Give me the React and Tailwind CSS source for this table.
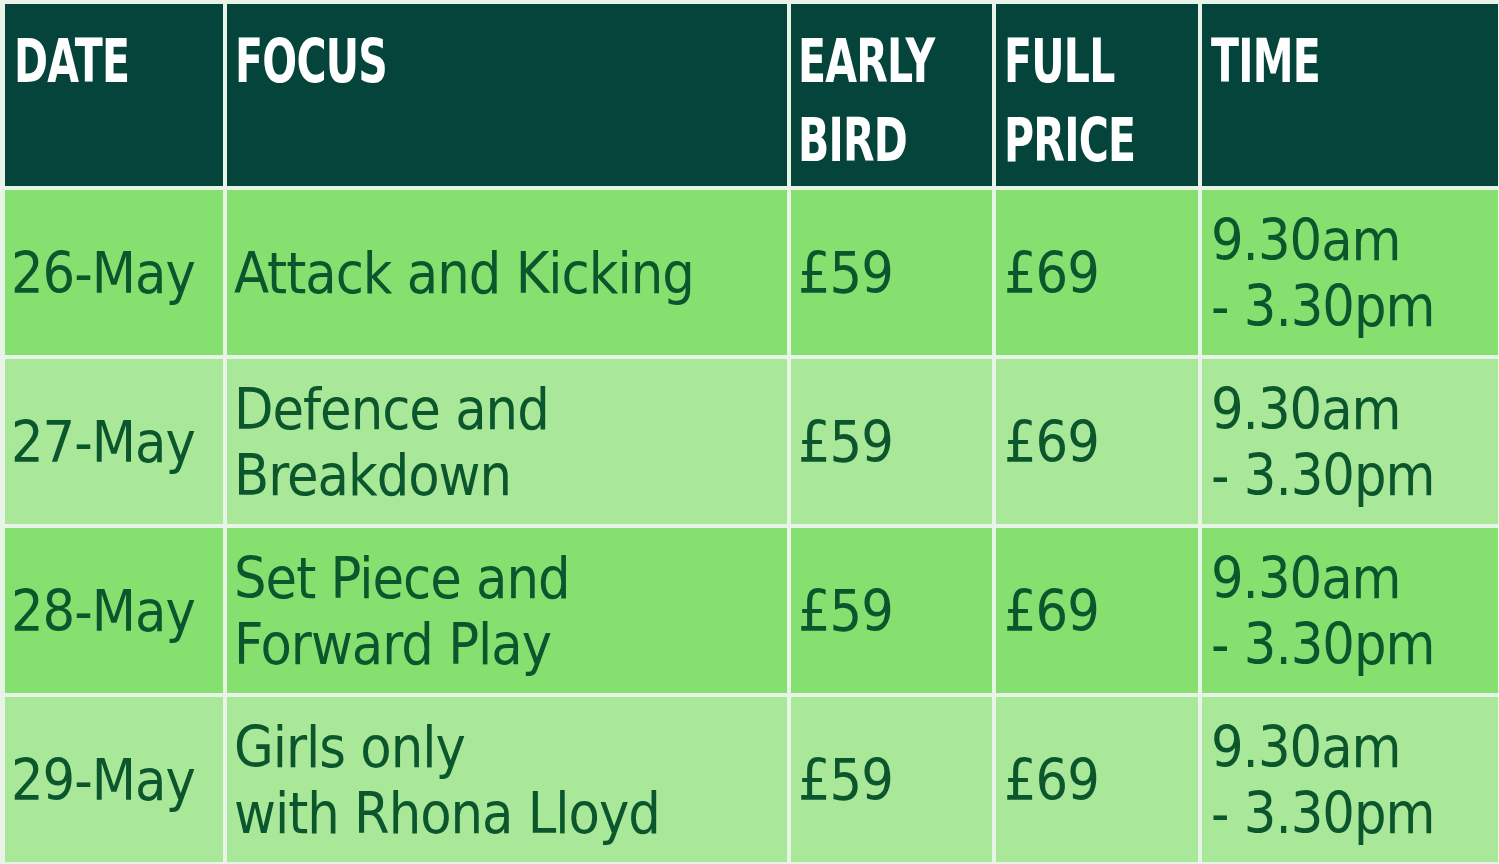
import React from 'react';

const rows = [
  { date: '26-May', focus: ['Attack and Kicking'], early: '£59', full: '£69', shade: 'bg-[#86e070]' },
  { date: '27-May', focus: ['Defence and', 'Breakdown'], early: '£59', full: '£69', shade: 'bg-[#a9e898]' },
  { date: '28-May', focus: ['Set Piece and', 'Forward Play'], early: '£59', full: '£69', shade: 'bg-[#86e070]' },
  { date: '29-May', focus: ['Girls only', 'with Rhona Lloyd'], early: '£59', full: '£69', shade: 'bg-[#a9e898]' }
];

const headers = [
  { key: 'date', lines: ['DATE'], pad: 'pl-[9px]' },
  { key: 'focus', lines: ['FOCUS'], pad: 'pl-[8px]' },
  { key: 'early', lines: ['EARLY', 'BIRD'], pad: 'pl-[7px]' },
  { key: 'full', lines: ['FULL', 'PRICE'], pad: 'pl-[8px]' },
  { key: 'time', lines: ['TIME'], pad: 'pl-[9px]' }
];

const bodyFont = "font-['DejaVu_Sans_Condensed',sans-serif]";

const Cell = ({ shade, pad, children }) => (
  <div className={`${shade} ${pad} flex flex-col justify-center text-[#0c562e] text-[57px] leading-[66px] tracking-[-1px] ${bodyFont}`}>
    {children}
  </div>
);

const App = () => {
  return (
    <div className="w-[1499px] h-[864px] bg-[#e9f4e9] pt-[4px] pl-[5px] overflow-hidden">
      <div className="grid grid-cols-[218px_560px_201px_202px_296px] grid-rows-[182px_165px_165px_165px_165px] gap-[4px]">
        {headers.map((h) => (
          <div key={h.key} className={`bg-[#04443a] ${h.pad} pt-[18px]`}>
            <div className="origin-left scale-x-[0.76] text-white text-[60px] leading-[79px] font-bold tracking-[-1px] font-['DejaVu_Sans_Condensed',sans-serif] whitespace-nowrap">
              {h.lines.map((l) => (
                <div key={l}>{l}</div>
              ))}
            </div>
          </div>
        ))}
        {rows.map((r) => (
          <React.Fragment key={r.date}>
            <Cell shade={r.shade} pad="pl-[6px]">{r.date}</Cell>
            <Cell shade={r.shade} pad="pl-[7px]">
              {r.focus.map((l) => (
                <div key={l}>{l}</div>
              ))}
            </Cell>
            <Cell shade={r.shade} pad="pl-[7px]">{r.early}</Cell>
            <Cell shade={r.shade} pad="pl-[8px]">{r.full}</Cell>
            <Cell shade={r.shade} pad="pl-[9px]">
              <div>9.30am</div>
              <div>- 3.30pm</div>
            </Cell>
          </React.Fragment>
        ))}
      </div>
    </div>
  );
};

export default App;
